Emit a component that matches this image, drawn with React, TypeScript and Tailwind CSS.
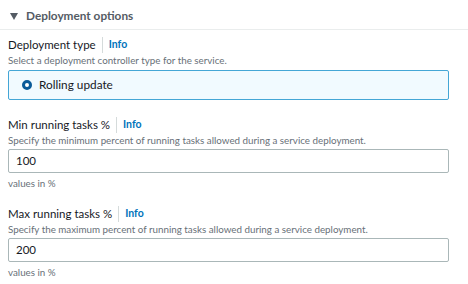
import React from 'react';

const font = { fontFamily: 'Lato, "Noto Sans", Arial, sans-serif' };

const FieldLabel = ({ label }: { label: string }) => (
  <div className="flex items-center h-[16px]">
    <span className="text-[11.5px] text-[#16191f]">{label}</span>
    <span className="mx-[6px] h-[16px] w-px bg-[#d5dbdb]" />
    <span className="text-[10.5px] font-bold text-[#0073bb]">Info</span>
  </div>
);

const Description = ({ text }: { text: string }) => (
  <div className="text-[9.8px] leading-[14px] text-[#687078]">{text}</div>
);

const NumberField = ({ label, desc, value }: { label: string; desc: string; value: string }) => (
  <div className="flex flex-col">
    <FieldLabel label={label} />
    <Description text={desc} />
    <div className="mt-[2px] h-[24px] w-[441px] border border-[#aab7b8] rounded-[2px] flex items-center px-[7px] text-[11.5px] text-[#16191f]">
      {value}
    </div>
    <div className="mt-[3px] text-[9.8px] leading-[14px] text-[#687078]">values in %</div>
  </div>
);

export default function App() {
  return (
    <div className="w-[468px] h-[284px] bg-white overflow-hidden" style={font}>
      <div className="h-[30px] flex items-center pl-[10px] pt-[3px] border-b border-[#eaeded]">
        <svg width="8" height="7" viewBox="0 0 8 7" className="mr-[8px]">
          <path d="M0 0 H8 L4 7 Z" fill="#545b64" />
        </svg>
        <span className="text-[11.8px] font-bold text-[#545b64]">Deployment options</span>
      </div>
      <div className="px-[8px] pt-[7px] flex flex-col">
        <FieldLabel label="Deployment type" />
        <Description text="Select a deployment controller type for the service." />
        <div className="mt-[3px] h-[30px] w-[441px] border border-[#44a6d6] bg-[#f1faff] rounded-[2px] flex items-center pl-[13px]">
          <span className="w-[10px] h-[10px] rounded-full border-[3px] border-[#0a5a99] bg-white" />
          <span className="ml-[7px] text-[11.8px] text-[#16191f]">Rolling update</span>
        </div>
        <div className="mt-[17px] flex flex-col gap-[16px]">
          <NumberField
            label="Min running tasks %"
            desc="Specify the minimum percent of running tasks allowed during a service deployment."
            value="100"
          />
          <NumberField
            label="Max running tasks %"
            desc="Specify the maximum percent of running tasks allowed during a service deployment."
            value="200"
          />
        </div>
      </div>
    </div>
  );
}
